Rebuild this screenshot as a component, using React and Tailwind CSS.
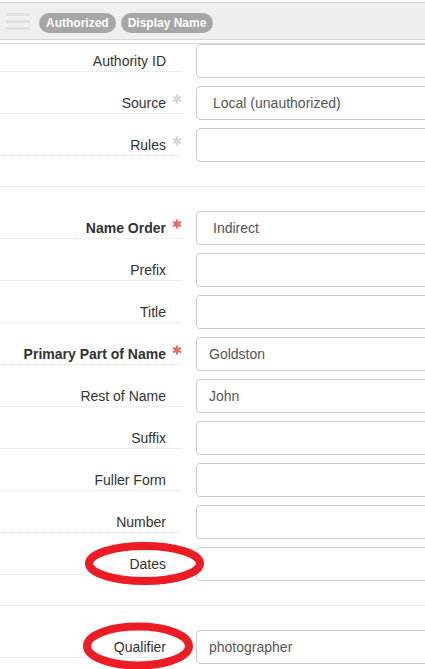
import React from "react";

function Star({ required }) {
  const c = required ? "#e86a6a" : "#d6d6d6";
  return (
    <svg width="10" height="10" viewBox="0 0 10 10" className="block">
      <g stroke={c} strokeWidth="2.2" strokeLinecap="butt">
        <line x1="5" y1="0.5" x2="5" y2="9.5" />
        <line x1="1.1" y1="2.75" x2="8.9" y2="7.25" />
        <line x1="1.1" y1="7.25" x2="8.9" y2="2.75" />
      </g>
    </svg>
  );
}

function Row({ label, bold, star, value, select }) {
  return (
    <div className="flex items-start mb-2">
      <div className="w-[181px] h-[28px] border-b border-dotted border-[#e0e0e0] flex justify-end items-start">
        <span
          className={
            "pt-[7px] leading-[20px] text-[14px] text-[#333] " +
            (bold ? "font-bold" : "")
          }
        >
          {label}
        </span>
        <span className="w-[15px] pl-[6px] pt-[8px]">
          {star ? <Star required={star === "req"} /> : null}
        </span>
      </div>
      <div
        className={
          "ml-[15px] flex-1 h-[34px] border border-[#cccccc] rounded-[4px] flex items-center text-[14px] text-[#555] " +
          (select ? "pl-[16px]" : "pl-[12px]")
        }
      >
        {value || ""}
      </div>
    </div>
  );
}

export default function App() {
  return (
    <div
      className="relative w-full h-[669px] overflow-hidden bg-white"
      style={{ fontFamily: '"Liberation Sans", Arial, sans-serif' }}
    >
      <div className="w-[480px]">
        <div className="h-[2px]" />
        <div className="h-[38px] border-t border-b border-[#d6d6d6] bg-[#efefef] flex items-center">
          <div className="ml-[6px] w-[24px] flex flex-col gap-[4px]">
            <div className="h-[3px] bg-[#e0e0e0]" />
            <div className="h-[3px] bg-[#e0e0e0]" />
            <div className="h-[3px] bg-[#e0e0e0]" />
          </div>
          <div className="ml-[9px] mt-[4px] flex gap-[5px]">
            <span className="h-[20px] px-[7px] rounded-full bg-[#a6a6a6] text-white text-[12px] font-bold leading-[20px]">
              Authorized
            </span>
            <span className="h-[20px] px-[7px] rounded-full bg-[#a6a6a6] text-white text-[12px] font-bold leading-[20px]">
              Display Name
            </span>
          </div>
        </div>
        <div className="h-[3px]" />
        <div className="h-[1px] bg-[#dadada]" />

        <div className="pb-4">
          <Row label="Authority ID" />
          <Row label="Source" star="opt" value="Local (unauthorized)" select />
          <Row label="Rules" star="opt" />
        </div>

        <div className="border-t border-[#e8e8e8] pt-[24px] pb-4">
          <Row label="Name Order" bold star="req" value="Indirect" select />
          <Row label="Prefix" />
          <Row label="Title" />
          <Row label="Primary Part of Name" bold star="req" value="Goldston" />
          <Row label="Rest of Name" value="John" />
          <Row label="Suffix" />
          <Row label="Fuller Form" />
          <Row label="Number" />
          <Row label="Dates" />
        </div>

        <div className="border-t border-[#e8e8e8] pt-[24px]">
          <Row label="Qualifier" value="photographer" />
        </div>
      </div>

      <svg
        className="absolute left-0 top-0 pointer-events-none"
        width="425"
        height="669"
        viewBox="0 0 425 669"
      >
        <ellipse cx="144.5" cy="563.5" rx="55.5" ry="17.5" fill="none" stroke="#ed1c24" strokeWidth="8" />
        <ellipse cx="138" cy="646" rx="51" ry="19.5" fill="none" stroke="#ed1c24" strokeWidth="8" />
      </svg>
    </div>
  );
}
